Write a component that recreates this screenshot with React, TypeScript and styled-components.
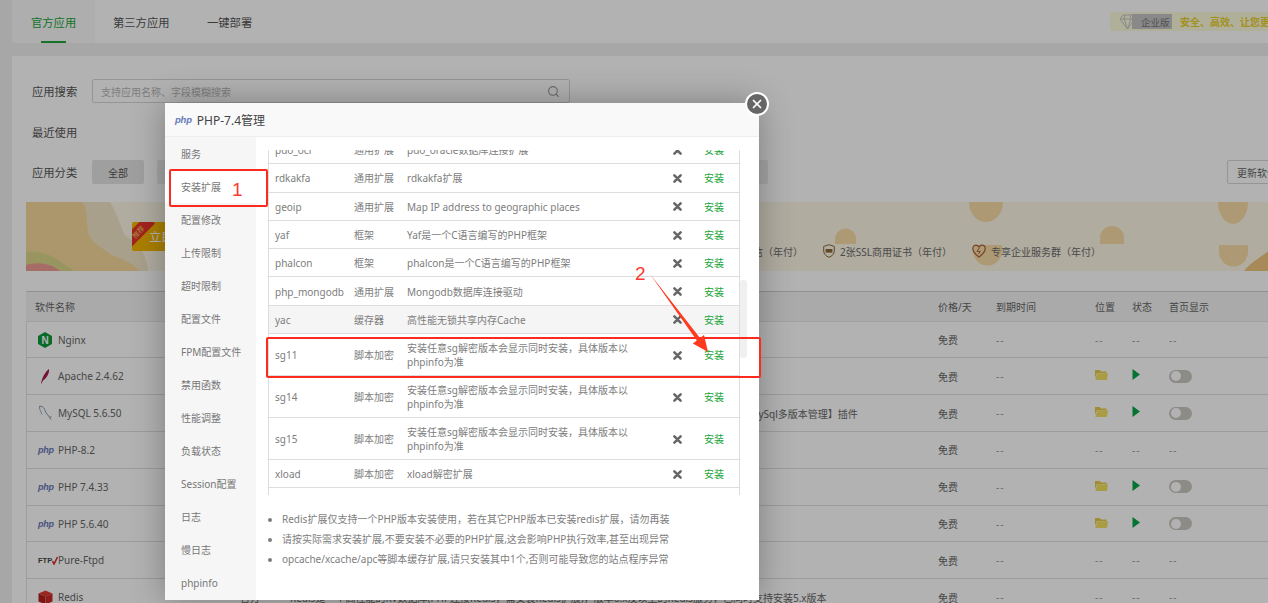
import * as React from 'react';
import styled, { createGlobalStyle } from 'styled-components';
import { Search, X } from 'lucide-react';

const FONT = '"Noto Sans", "Noto Sans CJK SC", sans-serif';

const GlobalStyle = createGlobalStyle`
  html, body {
    margin: 0;
    width: 1268px;
    height: 603px;
    overflow: hidden;
    background: #f0f0f0;
    font-family: ${FONT};
  }
  * { box-sizing: border-box; }
`;

type Perm = 'none' | 'on';

const softwares: { icon: string; name: string; dev?: string; desc?: string; ops: Perm }[] = [
  { icon: 'nginx', name: 'Nginx', ops: 'none' },
  { icon: 'apache', name: 'Apache 2.4.62', ops: 'on' },
  {
    icon: 'mysql',
    name: 'MySQL 5.6.50',
    desc: 'MySQL 5.6是一种关系数据库管理系统，使用简单、性能优良，如需安装其它版本请使用应用商店中的【MySql多版本管理】插件',
    ops: 'on',
  },
  { icon: 'php', name: 'PHP-8.2', ops: 'none' },
  { icon: 'php', name: 'PHP 7.4.33', ops: 'on' },
  { icon: 'php', name: 'PHP 5.6.40', ops: 'on' },
  { icon: 'ftp', name: 'Pure-Ftpd', ops: 'none' },
  {
    icon: 'redis',
    name: 'Redis',
    desc: 'Redis是一个高性能的KV数据库(PHP连接Redis，需安装Redis扩展)，版本6.x及以上的Redis服务，已同时支持安装5.x版本',
    ops: 'none',
  },
];

const extensions = [
  { name: 'pdo_oci', type: '通用扩展', desc: 'pdo_oracle数据库连接扩展' },
  { name: 'rdkakfa', type: '通用扩展', desc: 'rdkakfa扩展' },
  { name: 'geoip', type: '通用扩展', desc: 'Map IP address to geographic places' },
  { name: 'yaf', type: '框架', desc: 'Yaf是一个C语言编写的PHP框架' },
  { name: 'phalcon', type: '框架', desc: 'phalcon是一个C语言编写的PHP框架' },
  { name: 'php_mongodb', type: '通用扩展', desc: 'Mongodb数据库连接驱动' },
  { name: 'yac', type: '缓存器', desc: '高性能无锁共享内存Cache', hover: true },
  { name: 'sg11', type: '脚本加密', desc: '安装任意sg解密版本会显示同时安装，具体版本以phpinfo为准' },
  { name: 'sg14', type: '脚本加密', desc: '安装任意sg解密版本会显示同时安装，具体版本以phpinfo为准' },
  { name: 'sg15', type: '脚本加密', desc: '安装任意sg解密版本会显示同时安装，具体版本以phpinfo为准' },
  { name: 'xload', type: '脚本加密', desc: 'xload解密扩展' },
];

const navItems = [
  '服务', '安装扩展', '配置修改', '上传限制', '超时限制', '配置文件', 'FPM配置文件',
  '禁用函数', '性能调整', '负载状态', 'Session配置', '日志', '慢日志', 'phpinfo',
];

const PhpMark = ({ size = 9 }: { size?: number }) => <PhpText $size={size}>php</PhpText>;

const SoftIcon = ({ kind }: { kind: string }) => {
  if (kind === 'nginx')
    return (
      <svg width="14" height="16" viewBox="0 0 14 16">
        <polygon points="7,0 14,4 14,12 7,16 0,12 0,4" fill="#0b9a3c" />
        <text x="7" y="11.5" fontSize="10" fontWeight="700" fill="#fff" textAnchor="middle" fontFamily="Liberation Sans">N</text>
      </svg>
    );
  if (kind === 'apache')
    return (
      <svg width="14" height="16" viewBox="0 0 14 16">
        <path d="M3 15.5 C4 10 7 4 11 1 C11.5 5 9 10 5 12.5 L3.6 15.5 Z" fill="#a41b52" />
      </svg>
    );
  if (kind === 'mysql')
    return (
      <svg width="15" height="16" viewBox="0 0 15 16" fill="none">
        <path d="M1 1.5 C4 0.5 6 2.5 7 5.5 C8 9 11 10.5 13 14.5" stroke="#7c93a8" strokeWidth="1" />
        <path d="M1.5 2 C1.5 5 3 6.5 4 9.5" stroke="#9aa9b8" strokeWidth="1" />
        <path d="M11 12.5 L13.5 11.5" stroke="#7c93a8" strokeWidth="0.8" />
      </svg>
    );
  if (kind === 'php') return <PhpMark />;
  if (kind === 'ftp')
    return (
      <FtpMark>
        FTP
        <svg width="6" height="9" viewBox="0 0 6 9" fill="none">
          <path d="M0.5 5 L2 8 L5.5 1" stroke="#e02a2a" strokeWidth="1.6" />
        </svg>
      </FtpMark>
    );
  return (
    <svg width="15" height="15" viewBox="0 0 15 15">
      <polygon points="7.5,0.5 14.5,3.5 7.5,6.5 0.5,3.5" fill="#e0382f" />
      <polygon points="0.5,3.5 7.5,6.5 7.5,14.5 0.5,11.5" fill="#b3201c" />
      <polygon points="14.5,3.5 7.5,6.5 7.5,14.5 14.5,11.5" fill="#c92a24" />
    </svg>
  );
};

const FolderIcon = () => (
  <svg width="13" height="11" viewBox="0 0 13 11">
    <path d="M0 1 L4.5 1 L6 2.5 L11.5 2.5 L11.5 4 L2 4 L0 9 Z" fill="#e6c948" />
    <path d="M2.2 4.2 L13 4.2 L12 11 L0.4 11 Z" fill="#f2e060" />
  </svg>
);

const PlayIcon = () => (
  <svg width="8" height="11" viewBox="0 0 8 11">
    <polygon points="0.5,0 8,5.5 0.5,11" fill="#0aa548" />
  </svg>
);

const CrossIcon = () => (
  <svg width="9" height="9" viewBox="0 0 9 9">
    <path d="M1.4 1.4 L7.6 7.6 M7.6 1.4 L1.4 7.6" stroke="#666" strokeWidth="2.5" strokeLinecap="round" />
  </svg>
);

const BannerArt = () => (
  <BannerSvg viewBox="0 0 1281 69" preserveAspectRatio="none">
    <path d="M0 0 H84 C90 10 94 22 98 32 C106 40 120 44 122 69 H0 Z" fill="#f3e6c8" />
    <path d="M0 0 H56 C62 6 60 18 62 30 C64 40 74 44 84 52 C92 56 106 60 114 69 H0 Z" fill="#f6d99c" />
    <path d="M0 50 C10 48 24 52 32 58 C38 62 44 66 48 69 H0 Z" fill="#dcd68c" />
    <path d="M0 63 C8 60 24 60 34 69 H0 Z" fill="#ee9c92" />
    <ellipse cx="960" cy="0" rx="17" ry="20" fill="#f8dca6" />
    <ellipse cx="1207" cy="0" rx="15" ry="22" fill="#f8dca6" />
    <path d="M809 37 a10.5 10.5 0 0 1 21 0 v5 h-21 z" fill="#f8dca6" />
    <path d="M1074 36 a12 12 0 0 1 24 0 v6 h-24 z" fill="#f8dca6" />
    <path d="M947 43 h29 v6 a14.5 14.5 0 0 1 -29 0 z" fill="#f8dca6" />
    <path d="M1193 43 h29 v7 a14.5 14.5 0 0 1 -29 0 z" fill="#f8dca6" />
    <path d="M1218 69 C1225 60 1235 55 1255 40 V69 Z" fill="#efc67e" />
  </BannerSvg>
);

const App: React.FC = () => {
  return (
    <Shot>
      <GlobalStyle />

      <TabBar>
        <Tab $active>官方应用</Tab>
        <Tab>第三方应用</Tab>
        <Tab>一键部署</Tab>
        <Promo>
          <PromoGem width="17" height="16" viewBox="0 0 17 16" fill="none" stroke="#8a8a8a" strokeWidth="1">
            <path d="M4 1 H13 L16 5 L8.5 15 L1 5 Z M1 5 H16 M6 1 L5 5 L8.5 15 L12 5 L11 1" />
          </PromoGem>
          <PromoTag>企业版</PromoTag>
          <PromoText>安全、高效、让您更省心的面板</PromoText>
        </Promo>
      </TabBar>

      <Panel>
        <FilterRow>
          <FilterLabel>应用搜索</FilterLabel>
          <SearchBox>
            <SearchHint>支持应用名称、字段模糊搜索</SearchHint>
            <Search size={13} color="#999" />
          </SearchBox>
        </FilterRow>
        <FilterRow>
          <FilterLabel>最近使用</FilterLabel>
        </FilterRow>
        <FilterRow>
          <FilterLabel>应用分类</FilterLabel>
          <Pill $active>全部</Pill>
          {[1, 2, 3, 4, 5, 6, 7, 8].map((p) => (
            <WidePill key={p} />
          ))}
          <UpdateButton>更新软件列表</UpdateButton>
        </FilterRow>

        <Banner>
          <BannerArt />
          <BuyBadge>
            <BuyRibbon>推荐</BuyRibbon>
            立即开通
          </BuyBadge>
          <Perks>
            <Perk>1000条短信（年付）</Perk>
            <Perk>
              <svg width="12" height="14" viewBox="0 0 12 14" fill="none" stroke="#8a6a35" strokeWidth="1">
                <path d="M6 0.7 L11.3 2.4 V7 C11.3 10 8.8 12.2 6 13.3 C3.2 12.2 0.7 10 0.7 7 V2.4 Z" />
                <rect x="2.6" y="5" width="6.8" height="3.6" fill="#8a6a35" stroke="none" />
              </svg>
              2张SSL商用证书（年付）
            </Perk>
            <Perk>
              <svg width="14" height="14" viewBox="0 0 14 14" fill="none" stroke="#a5623a" strokeWidth="1.2">
                <path d="M7 13 C3 10 0.8 7.6 0.8 4.8 C0.8 2.6 2.4 1.2 4 1.2 C5.4 1.2 6.4 2 7 3 C7.6 2 8.6 1.2 10 1.2 C11.6 1.2 13.2 2.6 13.2 4.8 C13.2 7.6 11 10 7 13 Z" />
                <path d="M7.6 3.6 L5 7.4 H8.4 L6.4 10" strokeWidth="1" />
              </svg>
              专享企业服务群（年付）
            </Perk>
          </Perks>
        </Banner>

        <SoftTable>
          <SoftHead>
            <HeadCell $indent>软件名称</HeadCell>
            <HeadCell>开发商</HeadCell>
            <HeadCell>说明</HeadCell>
            <HeadCell>价格/天</HeadCell>
            <HeadCell>到期时间</HeadCell>
            <HeadCell>位置</HeadCell>
            <HeadCell>状态</HeadCell>
            <HeadCell>首页显示</HeadCell>
          </SoftHead>
          {softwares.map((s) => (
            <SoftRow key={s.name}>
              <SoftName>
                <IconSlot><SoftIcon kind={s.icon} /></IconSlot>
                {s.name}
              </SoftName>
              <span>{s.dev ?? '官方'}</span>
              <SoftDesc>{s.desc ?? ''}</SoftDesc>
              <span>免费</span>
              <Dash>--</Dash>
              {s.ops === 'on' ? (
                <>
                  <span><FolderIcon /></span>
                  <span><PlayIcon /></span>
                  <Toggle />
                </>
              ) : (
                <>
                  <Dash>--</Dash>
                  <Dash>--</Dash>
                  <Dash>--</Dash>
                </>
              )}
            </SoftRow>
          ))}
        </SoftTable>
      </Panel>

      <Mask />

      <Modal>
        <CloseButton>
          <X size={14} color="#fff" strokeWidth={3} />
        </CloseButton>
        <ModalTitle>
          <PhpMark size={9.5} />
          <span>PHP-7.4管理</span>
        </ModalTitle>
        <ModalBody>
          <SideNav>
            {navItems.map((n) => (
              <SideItem key={n} $active={n === '安装扩展'}>{n}</SideItem>
            ))}
          </SideNav>
          <ModalMain>
            <ExtScroller>
              <ExtTable>
                {extensions.map((e) => (
                  <ExtRow key={e.name} $hover={e.hover}>
                    <span>{e.name}</span>
                    <span>{e.type}</span>
                    <span>{e.desc}</span>
                    <CrossCell><CrossIcon /></CrossCell>
                    <InstallLink>安装</InstallLink>
                  </ExtRow>
                ))}
                <ExtRow />
              </ExtTable>
              <ScrollThumb />
            </ExtScroller>
            <Notes>
              <li>Redis扩展仅支持一个PHP版本安装使用，若在其它PHP版本已安装redis扩展，请勿再装</li>
              <li>请按实际需求安装扩展,不要安装不必要的PHP扩展,这会影响PHP执行效率,甚至出现异常</li>
              <li>opcache/xcache/apc等脚本缓存扩展,请只安装其中1个,否则可能导致您的站点程序异常</li>
            </Notes>
          </ModalMain>
        </ModalBody>
      </Modal>

      <RedBox $x={169} $y={169} $w={99} $h={38} />
      <RedNumber $x={232} $y={179}>1</RedNumber>
      <RedBox $x={266} $y={337} $w={495} $h={41} />
      <RedNumber $x={635} $y={263}>2</RedNumber>
      <ArrowSvg viewBox="648 272 62 82">
        <polygon
          points="650,274 700,338 704,335 708,352 692.8,343.4 696.8,340.4"
          fill="#ff3a1e"
        />
      </ArrowSvg>
    </Shot>
  );
};

const Shot = styled.div`
  position: relative;
  width: 1268px;
  height: 603px;
  overflow: hidden;
  padding-left: 12px;
  font-size: 10px;
  color: #666;
`;

const TabBar = styled.div`
  display: flex;
  align-items: stretch;
  width: 1288px;
  height: 43px;
  background: #fff;
`;

const Tab = styled.div<{ $active?: boolean }>`
  position: relative;
  display: flex;
  align-items: center;
  flex: none;
  padding: 0 18px;
  padding-left: ${({ $active }) => ($active ? '19px' : '18px')};
  font-size: 11.3px;
  white-space: nowrap;
  color: ${({ $active }) => ($active ? '#20a53a' : '#555')};
  background: ${({ $active }) => ($active ? '#f9f9f9' : 'transparent')};

  &:first-child { width: 83px; }
  &:nth-child(2) { width: 94px; }

  ${({ $active }) =>
    $active &&
    `&::after {
      content: '';
      position: absolute;
      left: 29px;
      bottom: 0;
      width: 25px;
      height: 2px;
      background: #20a53a;
    }`}
`;

const Promo = styled.div`
  display: flex;
  align-items: center;
  width: 190px;
  height: 19px;
  margin: 12px 0 0 auto;
  padding-left: 9px;
  background: #fdfbdc;
  border-radius: 3px;
  white-space: nowrap;
  overflow: hidden;
`;

const PromoGem = styled.svg`
  flex: none;
  position: relative;
  z-index: 1;
`;

const PromoTag = styled.span`
  display: flex;
  align-items: center;
  flex: none;
  width: 40px;
  height: 15px;
  margin-left: -4px;
  padding-left: 9px;
  background: #c4c4c4;
  color: #777;
  font-size: 9.5px;
`;

const PromoText = styled.span`
  flex: none;
  margin-left: 8px;
  font-weight: 700;
  font-size: 10px;
  color: #e8cf2a;
`;

const Panel = styled.div`
  display: flex;
  flex-direction: column;
  gap: 17.5px;
  width: 1300px;
  margin-top: 13px;
  height: 560px;
  padding: 23px 5px 0 14px;
  background: #fff;
`;

const FilterRow = styled.div`
  display: flex;
  align-items: center;
  height: 24px;
  padding-left: 6px;
  gap: 13px;
`;

const FilterLabel = styled.span`
  width: 47px;
  font-size: 11.3px;
  color: #555;
  white-space: nowrap;
`;

const SearchBox = styled.div`
  display: flex;
  align-items: center;
  justify-content: space-between;
  width: 478px;
  height: 24px;
  padding: 0 9px 0 8px;
  border: 1px solid #d6d6d6;
  border-radius: 2px;
  background: #fff;
`;

const SearchHint = styled.span`
  color: #b5b5b5;
`;

const Pill = styled.div<{ $active?: boolean }>`
  display: flex;
  align-items: center;
  justify-content: center;
  flex: none;
  width: 52px;
  height: 24px;
  border-radius: 2px;
  background: ${({ $active }) => ($active ? '#e4e4e4' : '#ececec')};
  color: #555;
`;

const WidePill = styled(Pill)`
  width: 65px;
`;

const UpdateButton = styled.div`
  flex: none;
  display: flex;
  align-items: center;
  justify-content: center;
  width: 80px;
  height: 24px;
  margin-left: auto;
  border: 1px solid #d6d6d6;
  border-radius: 2px;
  white-space: nowrap;
`;

const Banner = styled.div`
  position: relative;
  display: flex;
  align-items: flex-end;
  flex: none;
  height: 69px;
  background: #fdf6e6;
`;

const BannerSvg = styled.svg`
  position: absolute;
  inset: 0;
  width: 100%;
  height: 100%;
`;

const BuyBadge = styled.div`
  position: relative;
  overflow: hidden;
  display: flex;
  align-items: center;
  width: 90px;
  height: 29px;
  margin: 0 0 20px 106px;
  padding-left: 17px;
  background: #f5b800;
  border-radius: 2px;
  color: #fff;
  font-size: 12.5px;
  white-space: nowrap;
`;

const BuyRibbon = styled.span`
  position: absolute;
  left: -12px;
  top: 4px;
  width: 36px;
  padding: 1px 0;
  background: #e8332a;
  color: #f5d060;
  font-size: 7px;
  text-align: center;
  transform: rotate(-45deg);
`;

const Perks = styled.div`
  position: relative;
  display: flex;
  align-items: center;
  gap: 20px;
  margin: 0 206px 12px auto;
  color: #6a6a6a;
`;

const Perk = styled.div`
  display: flex;
  align-items: center;
  gap: 5px;
  white-space: nowrap;
`;

const softGrid = '214px 50px 648px 58px 99px 37px 37px 90px';

const SoftTable = styled.div`
  flex: none;
  margin-top: 2.5px;
  border-top: 1px solid #cfcfcf;
  border-left: 1px solid #e4e4e4;
`;

const SoftHead = styled.div`
  display: grid;
  grid-template-columns: ${softGrid};
  align-items: center;
  height: 30px;
  margin-left: -1px;
  background: #f4f4f4;
  border-bottom: 1px solid #e6e6e6;
`;

const HeadCell = styled.span<{ $indent?: boolean }>`
  padding-left: ${({ $indent }) => ($indent ? '9px' : '0')};
`;

const SoftRow = styled.div`
  display: grid;
  grid-template-columns: ${softGrid};
  align-items: center;
  height: 36.8px;
  margin-left: -1px;
  border-bottom: 1px solid #e0e0e0;
  white-space: nowrap;
`;

const SoftName = styled.div`
  display: flex;
  align-items: center;
  padding-left: 12px;
`;

const IconSlot = styled.span`
  display: flex;
  align-items: center;
  width: 20px;
  height: 16px;
`;

const SoftDesc = styled.span`
  overflow: hidden;
`;

const Dash = styled.span`
  color: #999;
  letter-spacing: 1px;
`;

const Toggle = styled.span`
  position: relative;
  display: block;
  width: 23px;
  height: 13px;
  border-radius: 7px;
  background: #cbc7c1;

  &::after {
    content: '';
    position: absolute;
    left: 1.5px;
    top: 1.5px;
    width: 10px;
    height: 10px;
    border-radius: 50%;
    background: #fff;
  }
`;

const PhpText = styled.span<{ $size: number }>`
  font-family: "Liberation Sans", sans-serif;
  font-size: ${({ $size }) => $size}px;
  font-style: italic;
  font-weight: 700;
  letter-spacing: -0.2px;
  color: #6878b8;
`;

const FtpMark = styled.span`
  display: inline-flex;
  align-items: center;
  font-family: "Liberation Sans", sans-serif;
  font-size: 7.5px;
  font-weight: 700;
  color: #444;
`;

const Mask = styled.div`
  position: absolute;
  inset: 0;
  background: rgba(0, 0, 0, 0.3);
`;

const Modal = styled.div`
  position: absolute;
  left: 165px;
  top: 103px;
  display: flex;
  flex-direction: column;
  width: 594px;
  height: 497px;
  background: #fff;
  box-shadow: 0 0 32px rgba(0, 0, 0, 0.3);
`;

const CloseButton = styled.div`
  position: absolute;
  right: -10px;
  top: -11px;
  display: flex;
  align-items: center;
  justify-content: center;
  width: 24px;
  height: 24px;
  border: 2px solid #fff;
  border-radius: 50%;
  background: #666;
`;

const ModalTitle = styled.div`
  display: flex;
  align-items: center;
  flex: none;
  gap: 5px;
  height: 34px;
  padding-left: 10px;
  background: #f9f9f9;
  border-bottom: 1px solid #eee;
  font-size: 12px;
  color: #444;
`;

const ModalBody = styled.div`
  display: flex;
  flex: 1;
  min-height: 0;
`;

const SideNav = styled.div`
  flex: none;
  width: 91px;
  background: #f6f6f6;
  overflow: hidden;
`;

const SideItem = styled.div<{ $active?: boolean }>`
  display: flex;
  align-items: center;
  height: 33px;
  padding-left: 16px;
  background: ${({ $active }) => ($active ? '#fff' : 'transparent')};
  color: #777;
  white-space: nowrap;
`;

const ModalMain = styled.div`
  flex: 1;
  min-width: 0;
  padding: 13px 0 0 12px;
`;

const ExtScroller = styled.div`
  position: relative;
  width: 480px;
  height: 345px;
  overflow: hidden;
`;

const ExtTable = styled.div`
  width: 472px;
  margin-top: -14px;
  border-left: 1px solid #ddd;
  border-right: 1px solid #ddd;
`;

const ExtRow = styled.div<{ $hover?: boolean }>`
  display: grid;
  grid-template-columns: 79px 53px 229px 46px 1fr;
  align-items: center;
  min-height: 28.3px;
  padding: 7px 0 6px 6px;
  line-height: 14px;
  border-bottom: 1px solid #ddd;
  background: ${({ $hover }) => ($hover ? '#f5f5f5' : '#fff')};
  color: #7d7d7d;
`;

const CrossCell = styled.span`
  display: flex;
  justify-content: flex-end;
`;

const InstallLink = styled.span`
  padding-left: 22px;
  color: #20a53a;
`;

const ScrollThumb = styled.div`
  position: absolute;
  left: 472px;
  top: 130px;
  width: 7px;
  height: 78px;
  border-radius: 3px;
  background: #f0f0f0;
`;

const Notes = styled.ul`
  margin: 14px 0 0;
  padding-left: 14px;
  list-style: disc;
  line-height: 20px;
  color: #7d7d7d;

  li { white-space: nowrap; }
`;

const RedBox = styled.div<{ $x: number; $y: number; $w: number; $h: number }>`
  position: absolute;
  left: ${({ $x }) => $x}px;
  top: ${({ $y }) => $y}px;
  width: ${({ $w }) => $w}px;
  height: ${({ $h }) => $h}px;
  border: 2.5px solid #fb2b1f;
  border-radius: 2px;
`;

const RedNumber = styled.span<{ $x: number; $y: number }>`
  position: absolute;
  left: ${({ $x }) => $x}px;
  top: ${({ $y }) => $y}px;
  font-size: 19px;
  line-height: 22px;
  font-family: "Liberation Sans", sans-serif;
  color: #fb3a30;
`;

const ArrowSvg = styled.svg`
  position: absolute;
  left: 648px;
  top: 272px;
  width: 62px;
  height: 82px;
`;

export default App;
